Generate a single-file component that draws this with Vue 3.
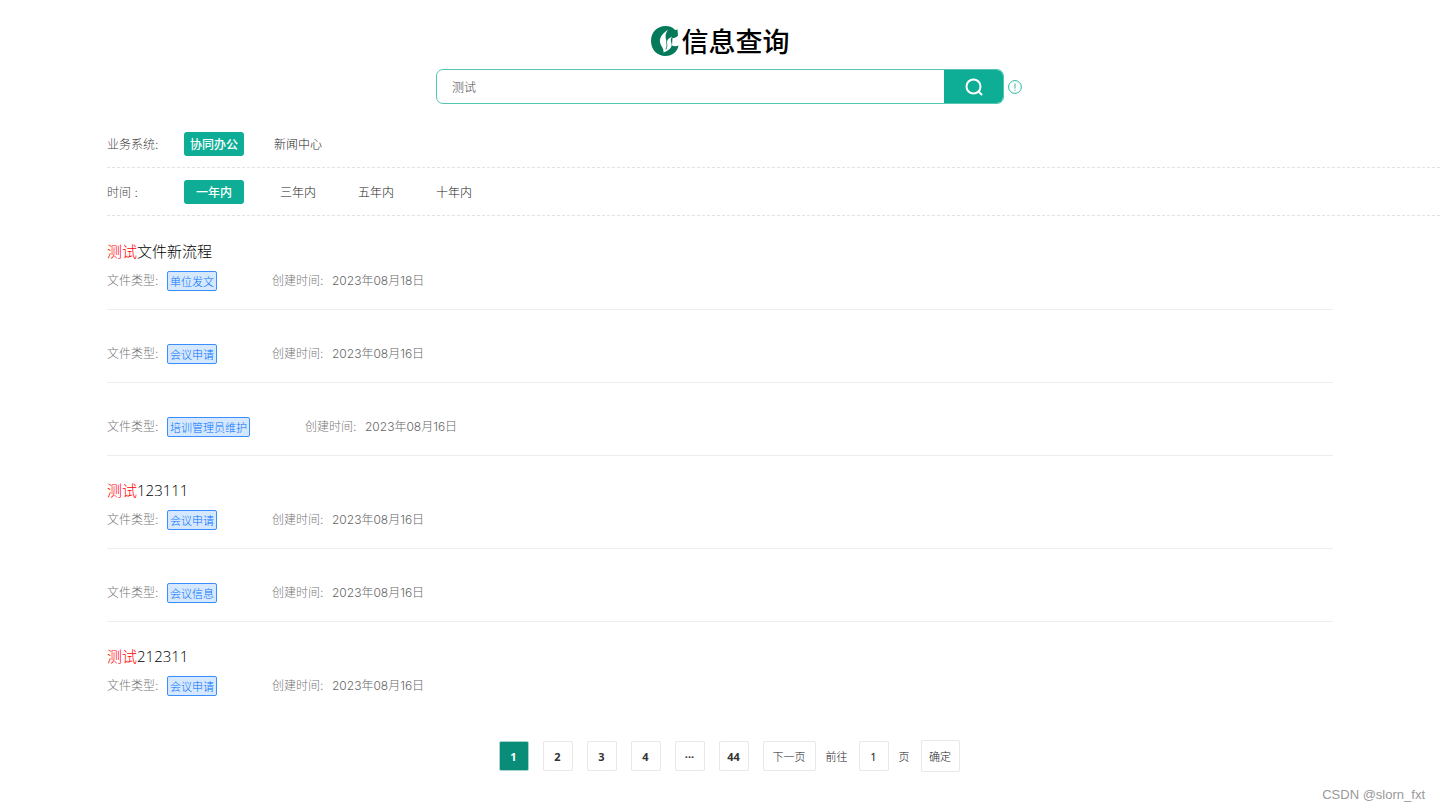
<script setup>
import { ref } from 'vue'

const keyword = ref('测试')
const jumpPage = ref('1')
const system = ref('协同办公')
const period = ref('一年内')
const current = ref('1')

const systems = ['协同办公', '新闻中心']
const periods = ['一年内', '三年内', '五年内', '十年内']
const pages = ['1', '2', '3', '4', '···', '44']

const results = [
  { hit: '测试', title: '文件新流程', type: '单位发文', date: '2023年08月18日' },
  { type: '会议申请', date: '2023年08月16日' },
  { type: '培训管理员维护', date: '2023年08月16日' },
  { hit: '测试', title: '123111', type: '会议申请', date: '2023年08月16日' },
  { type: '会议信息', date: '2023年08月16日' },
  { hit: '测试', title: '212311', type: '会议申请', date: '2023年08月16日' }
]
</script>

<template>
  <div class="page">
    <header class="brand">
      <svg class="logo" viewBox="0 0 28 30" aria-hidden="true">
        <path fill="#047a5b" d="M14.500 0C19 0 22 1.500 24 4L26.500 3.500L27 9.500C25.500 11.500 23.500 12 21.500 12L21 19.500C23.500 20.500 25.500 20.500 27.500 19.500C26.500 25.500 21.500 30 14.500 30C6 30 0 23.500 0 15C0 6.500 6 0 14.500 0Z" />
        <path fill="#fff" d="M17 3.500C11 8 8.500 11.500 9 16C9.500 20 13 22 12.500 26.500C18 24.500 21.500 21.500 20.500 17.500C19.500 14.500 19.500 13 21 10.500C18 12 16.500 13.500 16 15.500C14 12 14 8 17 3.500Z" />
        <path fill="none" stroke="#047a5b" stroke-width="0.800" d="M15.500 14.500C15 17 17 19 15 23.500" />
      </svg>
      <h1>信息查询</h1>
    </header>

    <form class="search" @submit.prevent>
      <div class="search-box">
        <input v-model="keyword" type="text" aria-label="搜索关键词" />
        <button type="submit" aria-label="搜索">
          <svg viewBox="0 0 18 18" aria-hidden="true">
            <circle cx="8.500" cy="8.500" r="7" />
            <path d="M13.500 13.500 L16.500 16.500" />
          </svg>
        </button>
      </div>
      <svg class="info" viewBox="0 0 14 14" aria-hidden="true">
        <circle cx="7" cy="7" r="6.400" />
        <path d="M7 3.500V8.500M7 9.500V10.500" />
      </svg>
    </form>

    <section class="filters">
      <div class="filter">
        <span class="filter-label">业务系统:</span>
        <button v-for="s in systems" :key="s" type="button" class="option" :class="{ active: s === system }" @click="system = s">{{ s }}</button>
      </div>
      <div class="filter">
        <span class="filter-label">时间 :</span>
        <button v-for="p in periods" :key="p" type="button" class="option" :class="{ active: p === period }" @click="period = p">{{ p }}</button>
      </div>
    </section>

    <main class="results">
      <article v-for="(r, i) in results" :key="i" class="result" :class="{ untitled: !r.title }">
        <h2 v-if="r.title"><em>{{ r.hit }}</em>{{ r.title }}</h2>
        <div class="meta">
          <span class="meta-label">文件类型:</span>
          <span class="tag">{{ r.type }}</span>
          <span class="meta-label created">创建时间:</span>
          <time>{{ r.date }}</time>
        </div>
      </article>
    </main>

    <nav class="pager" aria-label="分页">
      <button v-for="p in pages" :key="p" type="button" class="num" :class="{ current: p === current }" @click="current = p">{{ p }}</button>
      <button type="button" class="next">下一页</button>
      <label for="jump">前往</label>
      <input id="jump" v-model="jumpPage" type="text" />
      <span class="unit">页</span>
      <button type="button" class="confirm">确定</button>
    </nav>

    <footer>CSDN @slorn_fxt</footer>
  </div>
</template>

<style>
body {
  margin: 0;
  background: #fff;
}
</style>

<style scoped>
.page {
  font-family: Inter, "Noto Sans CJK SC", sans-serif;
  font-size: 12px;
  font-weight: 300;
  line-height: 20px;
  color: #222;
}
button,
input {
  box-sizing: border-box;
  margin: 0;
  padding: 0;
  border: 0;
  background: none;
  font: inherit;
  color: inherit;
}
button {
  cursor: pointer;
}
.brand {
  display: flex;
  justify-content: center;
  align-items: flex-start;
  gap: 3px;
  padding-top: 24px;
}
.logo {
  width: 28px;
  height: 30px;
  margin-top: 2px;
}
h1 {
  margin: 0;
  font-size: 27px;
  font-weight: 500;
  line-height: 38px;
  color: #000;
}
.search {
  display: flex;
  justify-content: center;
  align-items: center;
  gap: 4px;
  padding: 7px 0 16px 18px;
}
.search-box {
  display: flex;
  box-sizing: border-box;
  width: 568px;
  height: 35px;
  border: 1px solid #55c6b2;
  border-radius: 7px;
  overflow: hidden;
}
.search-box input {
  flex: 1;
  padding: 2px 15px 0;
  color: #444;
  outline: none;
}
.search-box button {
  display: flex;
  align-items: center;
  justify-content: center;
  width: 59px;
  background: #0eae96;
}
.search-box svg {
  width: 18px;
  height: 18px;
  fill: none;
  stroke: #fff;
  stroke-width: 2;
  stroke-linecap: round;
}
.info {
  width: 14px;
  height: 14px;
  fill: none;
  stroke: #2cb8a2;
  stroke-width: 1;
}
.filters {
  margin-left: 107px;
}
.filter {
  display: flex;
  align-items: center;
  gap: 18px;
  padding: 12px 0 11px;
  border-bottom: 1px dashed #e2e2e2;
}
.filter-label {
  width: 59px;
  padding-top: 2px;
  color: #444;
}
.option {
  width: 60px;
  height: 24px;
  padding-top: 2px;
  border-radius: 3px;
  white-space: nowrap;
}
.option.active {
  margin-right: 6px;
  background: #0eae96;
  font-weight: 500;
  color: #fff;
}
.results {
  margin: 1px 107px 0;
}
.result {
  padding: 23px 0 18px;
  border-bottom: 1px solid #ededed;
}
.result.untitled {
  padding-top: 34px;
}
.result:last-child {
  border-bottom: 0;
}
h2 {
  margin: 0 0 9px;
  font-family: "Open Sans", "Noto Sans CJK SC", sans-serif;
  font-size: 15px;
  font-weight: 300;
  line-height: 22px;
  color: #000;
}
h2 em {
  font-style: normal;
  color: #f00;
}
.meta {
  display: flex;
  align-items: center;
  height: 20px;
}
.meta-label {
  width: 60px;
  color: #777;
}
.tag {
  box-sizing: border-box;
  height: 20px;
  padding: 0 2px;
  border: 1px solid #3a8ffc;
  border-radius: 2px;
  background: #d6e8fd;
  font-size: 11px;
  line-height: 20px;
  color: #0070ff;
}
.created {
  margin-left: 55px;
}
time {
  color: #666;
}
.pager {
  display: flex;
  align-items: center;
  justify-content: center;
  gap: 14px;
  margin-top: 26px;
  padding-left: 18px;
  font-size: 11px;
}
.pager button,
.pager input {
  height: 30px;
  padding-top: 2px;
  border: 1px solid #e8e8e8;
  border-radius: 2px;
  text-align: center;
}
.pager .num,
.pager input {
  width: 30px;
}
.pager .num {
  font-family: "Noto Sans", "Noto Sans CJK SC", sans-serif;
  font-weight: 700;
  color: #333;
}
.pager .current {
  border-color: #a5d4ca;
  background: #0a8d78;
  color: #fff;
}
.pager .next {
  width: 53px;
}
.pager label,
.pager .unit {
  padding-top: 2px;
}
.pager label {
  margin-left: -4px;
}
.pager input {
  margin: 0 -4px 0 -3px;
  padding-top: 0;
  font-family: "Noto Sans", sans-serif;
  font-weight: 400;
}
.pager .confirm {
  width: 39px;
  height: 32px;
  margin-left: -3px;
}
footer {
  padding: 13px 15px 0;
  text-align: right;
  font-family: "Liberation Sans", sans-serif;
  font-size: 13px;
  color: #999;
}
</style>
